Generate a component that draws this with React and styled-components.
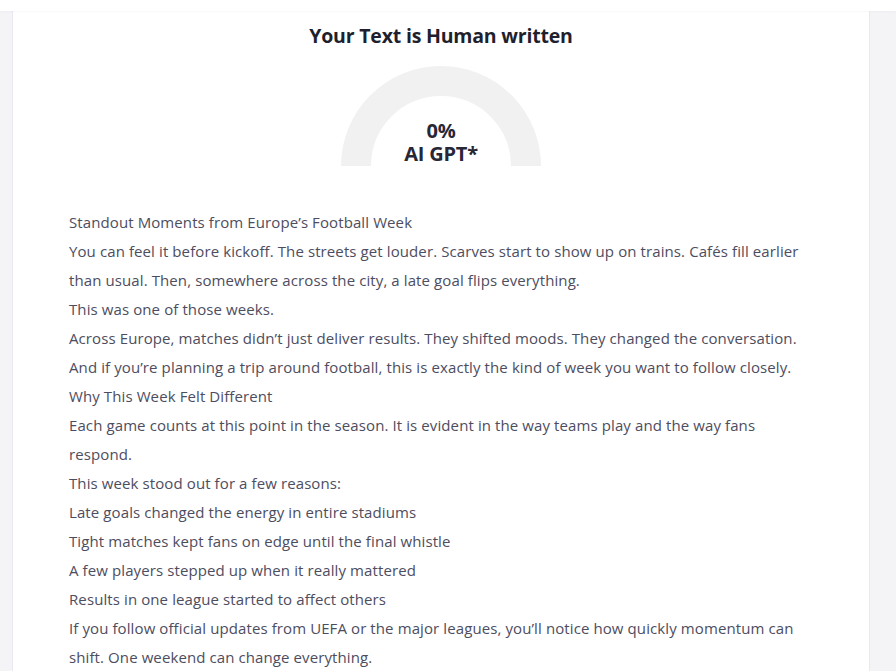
import React from "react";
import styled, { createGlobalStyle } from "styled-components";

const GlobalStyle = createGlobalStyle`
  html, body {
    margin: 0;
    padding: 0;
    background: #f4f4f7;
  }
  body {
    font-family: "Open Sans", "Noto Sans", sans-serif;
  }
`;

const Page = styled.div`
  min-height: 671px;
  display: flex;
  flex-direction: column;
`;

const TopBar = styled.div`
  height: 11px;
  background: #fff;
  box-shadow: 0 1px 2px rgba(30, 30, 60, 0.03);
  position: relative;
  z-index: 1;
`;

const Main = styled.div`
  padding: 0 26px 0 12px;
  display: flex;
`;

const Card = styled.section`
  flex: 1;
  background: #fff;
  border-left: 1px solid #e9e8f4;
  border-right: 1px solid #e9e8f4;
  padding: 9px 56px 0 56px;
  min-height: 660px;
`;

const Title = styled.h2`
  margin: 0;
  text-align: center;
  font-size: 19.5px;
  line-height: 32px;
  font-weight: 700;
  color: #1f1f2e;
  letter-spacing: -0.2px;
`;

const GaugeWrap = styled.div`
  position: relative;
  width: 200px;
  height: 100px;
  margin: 14px auto 0;
`;

const GaugeLabel = styled.div`
  position: absolute;
  left: 0;
  right: 0;
  bottom: 1px;
  display: flex;
  flex-direction: column;
  align-items: center;
  gap: 1px;
  font-size: 20px;
  font-weight: 700;
  color: #272736;
  letter-spacing: -0.2px;
`;

const GaugeText = styled.span`
  display: block;
  height: 22px;
  line-height: 22px;
`;

const Body = styled.div`
  margin-top: 42px;
  font-size: 15px;
  letter-spacing: 0.1px;
  line-height: 29px;
  color: #4d4d60;
`;

const Line = styled.p`
  margin: 0;
`;

const lines = [
  "Standout Moments from Europe’s Football Week",
  "You can feel it before kickoff. The streets get louder. Scarves start to show up on trains. Cafés fill earlier than usual. Then, somewhere across the city, a late goal flips everything.",
  "This was one of those weeks.",
  "Across Europe, matches didn’t just deliver results. They shifted moods. They changed the conversation.",
  "And if you’re planning a trip around football, this is exactly the kind of week you want to follow closely.",
  "Why This Week Felt Different",
  "Each game counts at this point in the season. It is evident in the way teams play and the way fans respond.",
  "This week stood out for a few reasons:",
  "Late goals changed the energy in entire stadiums",
  "Tight matches kept fans on edge until the final whistle",
  "A few players stepped up when it really mattered",
  "Results in one league started to affect others",
  "If you follow official updates from UEFA or the major leagues, you’ll notice how quickly momentum can shift. One weekend can change everything.",
];

const Gauge = ({ value }) => {
  const r = 85;
  const cx = 100;
  const cy = 100;
  const angle = Math.PI * (1 - value / 100);
  const ex = cx + r * Math.cos(angle);
  const ey = cy - r * Math.sin(angle);
  return (
    <GaugeWrap>
      <svg width="200" height="100" viewBox="0 0 200 100">
        <path
          d={`M ${cx - r} ${cy} A ${r} ${r} 0 0 1 ${cx + r} ${cy}`}
          fill="none"
          stroke="#f1f1f2"
          strokeWidth="30"
        />
        {value > 0 && (
          <path
            d={`M ${cx - r} ${cy} A ${r} ${r} 0 0 1 ${ex} ${ey}`}
            fill="none"
            stroke="#e5484d"
            strokeWidth="30"
          />
        )}
      </svg>
      <GaugeLabel>
        <GaugeText>{value}%</GaugeText>
        <GaugeText>AI GPT*</GaugeText>
      </GaugeLabel>
    </GaugeWrap>
  );
};

export default function App() {
  return (
    <Page>
      <GlobalStyle />
      <TopBar />
      <Main>
        <Card>
          <Title>Your Text is Human written</Title>
          <Gauge value={0} />
          <Body>
            {lines.map((text, i) => (
              <Line key={i}>{text}</Line>
            ))}
          </Body>
        </Card>
      </Main>
    </Page>
  );
}
